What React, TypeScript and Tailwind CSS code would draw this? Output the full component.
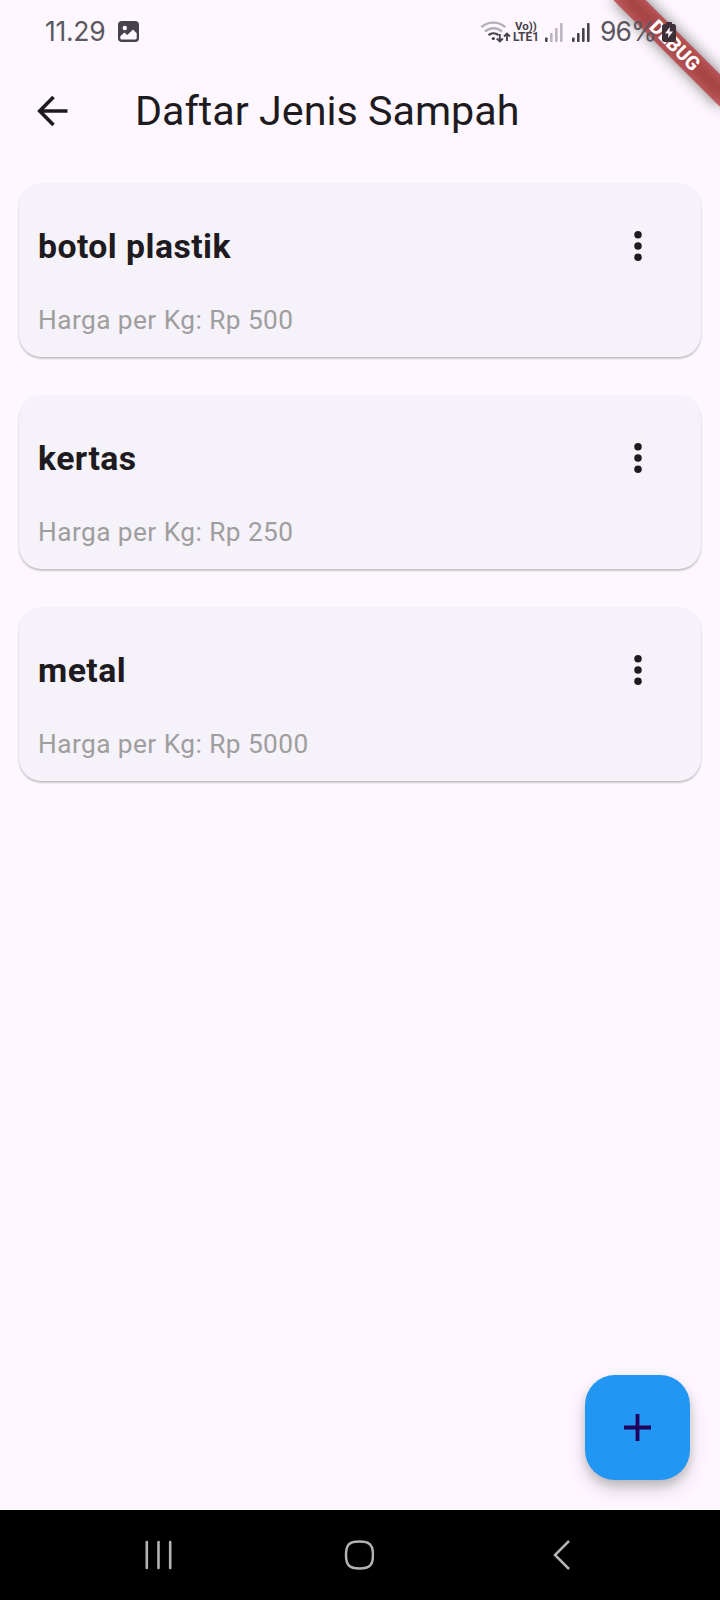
import React from "react";

const items = [
  { name: "botol plastik", price: 500 },
  { name: "kertas", price: 250 },
  { name: "metal", price: 5000 },
];

function PhotoIcon() {
  return (
    <svg className="ml-[13px] h-[21px] w-[21px] shrink-0" viewBox="0 0 21 21">
      <rect width="21" height="21" rx="4" fill="#46434a" />
      <circle cx="6.8" cy="7" r="2.2" fill="#fef7ff" />
      <path d="M2.3 15.2 6.3 11.6 9.3 14 15 8.6 18.7 12.2V17a1.6 1.6 0 0 1-1.6 1.6H3.9A1.6 1.6 0 0 1 2.3 17Z" fill="#fef7ff" />
    </svg>
  );
}

function WifiIcon() {
  return (
    <svg className="h-[24px] w-[31px] shrink-0" viewBox="480 19 31 24" fill="none">
      <path d="M481.300 26.200a18 18 0 0 1 24 0" stroke="#b5b0b8" strokeWidth="2.400" />
      <path d="M485 30.600a12.500 12.500 0 0 1 17 0" stroke="#b5b0b8" strokeWidth="2.400" />
      <path d="M488.500 34.200a8 8 0 0 1 10 0" stroke="#46434a" strokeWidth="2.200" />
      <circle cx="493.300" cy="37.600" r="1.600" fill="#46434a" />
      <path d="M499.800 33v7.500M496.800 37.500l3 3 3-3M507 40v-7.500M504 35.500l3-3 3 3" stroke="#46434a" strokeWidth="1.900" />
    </svg>
  );
}

function SignalIcon({ level }: { level: number }) {
  return (
    <svg className="h-[20px] w-[18px] shrink-0" viewBox="0 0 18 20">
      {[4.5, 9, 14, 19].map((h, i) => (
        <rect key={h} x={i * 5} y={20 - h} width="2.6" height={h} rx="0.8" fill={i < level ? "#46434a" : "#bbb5be"} />
      ))}
    </svg>
  );
}

function StatusBar() {
  return (
    <div className="flex h-[63px] items-center pl-[45px] pr-[44px] font-['Inter',sans-serif] text-[#5a575e]">
      <span className="w-[60px] whitespace-nowrap text-[26.500px] tracking-[-0.300px]">11.29</span>
      <PhotoIcon />
      <div className="flex-1" />
      <WifiIcon />
      <div className="ml-[2px] flex w-[26px] flex-col items-center font-['Roboto',sans-serif] font-bold text-[#46434a]">
        <div className="whitespace-nowrap text-[11.500px] leading-[11px]">Vo))</div>
        <div className="whitespace-nowrap text-[12px] leading-[11px]">LTE1</div>
      </div>
      <div className="ml-[6px] flex gap-[9px]">
        <SignalIcon level={1} />
        <SignalIcon level={4} />
      </div>
      <span className="relative z-20 ml-[10px] w-[58px] whitespace-nowrap text-[26.500px] tracking-[-0.900px]">96%</span>
      <svg className="relative z-20 ml-[4px] h-[20px] w-[14px] shrink-0" viewBox="0 0 14 20">
        <path d="M4 2V.8Q4 0 4.8 0h4.4Q10 0 10 .8V2h1.500Q14 2 14 4.500v13Q14 20 11.500 20h-9Q0 20 0 17.500v-13Q0 2 2.500 2Z" fill="#3d3036" />
        <path d="M8 5 3 11.500h3.500L6 16l5-6.500H7.500Z" fill="#fef7ff" />
      </svg>
    </div>
  );
}

function DebugBanner() {
  return (
    <div className="pointer-events-none absolute right-0 top-0 z-10 h-[160px] w-[160px] overflow-hidden">
      <div className="absolute left-[39.900px] top-[33.800px] h-[22.500px] w-[150px] rotate-45">
        <div className="absolute inset-0 bg-black/50 blur-[7.400px]" />
        <div className="absolute inset-0 flex items-center justify-center bg-[#b71c1c]/63 font-['Roboto',sans-serif] text-[19.500px] font-extrabold leading-none text-white">
          DEBUG
        </div>
      </div>
    </div>
  );
}

function WasteCard({ name, price }: { name: string; price: number }) {
  return (
    <article className="flex h-[174.500px] flex-col rounded-[22.500px] bg-[#f6f2f9] px-[19px] shadow-[0_2px_2px_rgba(0,0,0,0.18),0_1px_2px_rgba(0,0,0,0.08)]">
      <div className="mt-[29.500px] flex h-[68px] items-center justify-between pr-[36.500px]">
        <h2 className="text-[33.750px] font-bold leading-[45px] tracking-[0.450px] text-[#1d1b20]">{name}</h2>
        <svg className="h-[32px] w-[16px]" viewBox="0 0 16 32" fill="#1d1b20">
          <circle cx="8" cy="4.700" r="3.750" />
          <circle cx="8" cy="16" r="3.750" />
          <circle cx="8" cy="27.300" r="3.750" />
        </svg>
      </div>
      <p className="mt-[22px] text-[26.250px] leading-[37px] tracking-[0.440px] text-[#9e9e9e]">Harga per Kg: Rp {price}</p>
    </article>
  );
}

export default function App() {
  return (
    <div className="relative flex h-[1600px] w-[720px] flex-col overflow-hidden bg-[#fef7ff] font-['Roboto',sans-serif]">
      <StatusBar />
      <DebugBanner />
      <header className="flex h-[96px] items-center pl-[37px]">
        <svg className="h-[32px] w-[32px]" viewBox="0 0 32 32" fill="none" stroke="#1d1b20" strokeWidth="3.600">
          <path d="M30.500 16H3M16.500 2 2.700 16l13.800 14" />
        </svg>
        <h1 className="ml-[66px] text-[41.250px] leading-[52px] text-[#1d1b20]">Daftar Jenis Sampah</h1>
      </header>
      <main className="mt-[23.500px] flex flex-1 flex-col gap-[37.500px] px-[19px]">
        {items.map((item) => (
          <WasteCard key={item.name} name={item.name} price={item.price} />
        ))}
      </main>
      <button
        aria-label="Tambah"
        className="absolute bottom-[120px] right-[30px] flex h-[105px] w-[105px] items-center justify-center rounded-[30px] bg-[#2196f3] shadow-[0_5px_9px_rgba(0,0,0,0.14),0_10px_19px_rgba(0,0,0,0.16)]"
      >
        <svg className="h-[27px] w-[27px]" viewBox="0 0 27 27" stroke="#21005d" strokeWidth="3.800">
          <path d="M0 13.500h27M13.500 0v27" />
        </svg>
      </button>
      <nav className="flex h-[90px] items-center bg-black pb-[1px] pl-[144px]">
        <svg className="h-[30px] w-[29px]" viewBox="0 0 29 30" stroke="#b3b3b3" strokeWidth="2.600" strokeLinecap="round">
          <path d="M2.800 2v26M14.500 2v26M26.200 2v26" />
        </svg>
        <svg className="ml-[171px] h-[30px] w-[30px]" viewBox="0 0 30 30" fill="none" stroke="#b3b3b3" strokeWidth="2.500">
          <path d="M15.500 1.500C25.500 1.500 29 4.500 29 15S25.500 28.500 15.500 28.500 2 25.500 2 15 5 1.500 15.500 1.500Z" />
        </svg>
        <svg className="ml-[177px] h-[32px] w-[20px]" viewBox="0 0 20 32" fill="none" stroke="#b3b3b3" strokeWidth="2.500">
          <path d="M18 2 4 16l14 14" />
        </svg>
      </nav>
    </div>
  );
}
